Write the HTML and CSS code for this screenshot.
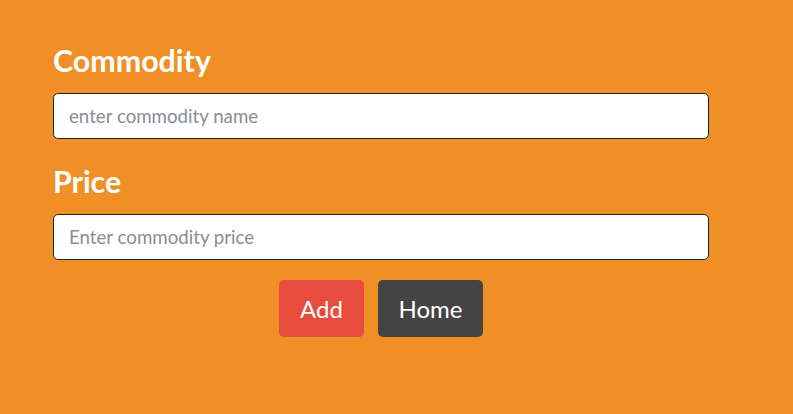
FILE: index.html
```html
<!DOCTYPE html>
<html>
<head>
<meta charset="utf-8">
<link rel="stylesheet" href="styles.css">
</head>
<body>
<form class="form">
  <label class="label" for="name">Commodity</label>
  <input class="field" id="name" type="text" placeholder="enter commodity name">
  <label class="label label-second" for="price">Price</label>
  <input class="field" id="price" type="text" placeholder="Enter commodity price">
  <div class="actions">
    <button type="button" class="btn btn-add">Add</button>
    <button type="button" class="btn btn-home">Home</button>
  </div>
</form>
</body>
</html>
```
FILE: styles.css
```css
html, body {
  margin: 0;
  height: 100%;
}
body {
  background: #f08f25;
  font-family: Lato, "Open Sans", sans-serif;
}
.form {
  width: 656px;
  padding: 42px 0 0 53px;
  display: flex;
  flex-direction: column;
}
.label {
  display: block;
  color: #fff;
  font-weight: 700;
  font-size: 30.4px;
  line-height: 36px;
  margin-bottom: 15px;
}
.label-second {
  margin-top: 24px;
}
.field {
  box-sizing: border-box;
  width: 656px;
  height: 46px;
  border: 1px solid #222;
  border-radius: 5px;
  background: #fff;
  padding: 0 15px;
  font-family: Lato, sans-serif;
  font-size: 18.7px;
  color: #333;
  outline: none;
}
.field::placeholder {
  color: #868e96;
}
.actions {
  display: flex;
  justify-content: center;
  gap: 14px;
  margin-top: 20px;
}
.btn {
  height: 57px;
  border: none;
  border-radius: 5px;
  color: #fff;
  font-family: Lato, sans-serif;
  font-size: 24px;
  padding: 0 20.5px;
  cursor: pointer;
}
.btn-add {
  background: #e74c3c;
  padding: 0 21px;
}
.btn-home {
  background: #444444;
}
```
